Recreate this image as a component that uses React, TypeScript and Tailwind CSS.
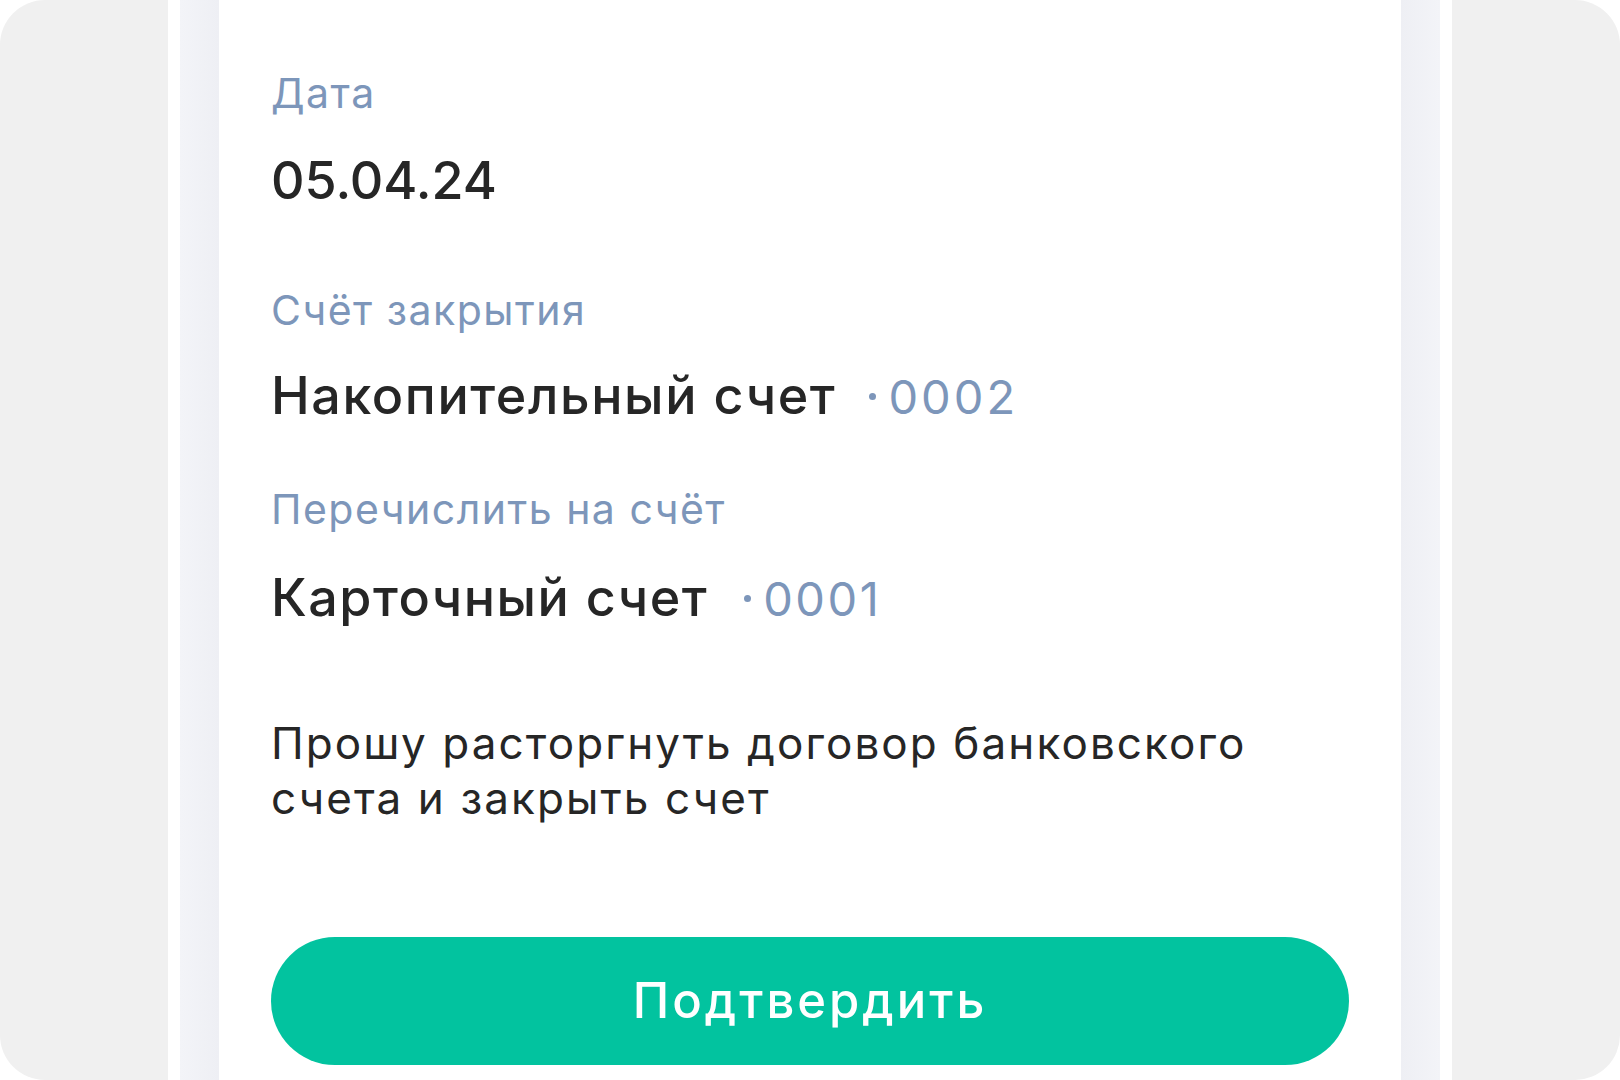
export default function App() {
  return (
    <div className="w-[1620px] h-[1080px] bg-white overflow-hidden">
      <div className="h-full bg-[#f0f0f0] rounded-[45px] flex justify-center">
        {/* white phone frame */}
        <div className="w-[1284px] h-full bg-white px-[12px] flex">
          <div className="w-[39px] h-full bg-gradient-to-r from-[#f3f4f8] to-[#eeeff4]" />
          <div
            className="flex-1 h-full bg-white px-[52px] flex flex-col text-[#262626]"
            style={{ fontFamily: 'Inter, "Noto Sans", sans-serif' }}
          >
            <p className="pt-[73px] text-[41px] leading-none tracking-[1.5px] text-[#7d96ba]">Дата</p>
            <p className="mt-[41px] text-[52px] leading-none font-medium">05.04.24</p>

            <p className="mt-[83px] text-[41px] leading-none tracking-[1.5px] text-[#7d96ba]">Счёт закрытия</p>
            <div className="mt-[39px] flex items-baseline leading-none">
              <span className="text-[52px] font-medium tracking-[1.6px]">Накопительный счет</span>
              <span className="ml-[33px] w-[7px] h-[7px] rounded-full bg-[#7d96ba] -translate-y-[14px]" />
              <span className="ml-[12px] text-[47px] tracking-[3px] text-[#7d96ba]">0002</span>
            </div>

            <p className="mt-[67px] text-[41px] leading-none tracking-[1.5px] text-[#7d96ba]">Перечислить на счёт</p>
            <div className="mt-[42px] flex items-baseline leading-none">
              <span className="text-[52px] font-medium tracking-[1.5px]">Карточный счет</span>
              <span className="ml-[36px] w-[7px] h-[7px] rounded-full bg-[#7d96ba] -translate-y-[14px]" />
              <span className="ml-[12px] text-[47px] tracking-[2.5px] text-[#7d96ba]">0001</span>
            </div>

            <p className="mt-[92px] text-[44px] leading-[55px] tracking-[2.1px]">
              Прошу расторгнуть договор банковского
              <br />
              счета и закрыть счет
            </p>

            <button className="mt-[111px] h-[128px] w-full shrink-0 rounded-full bg-[#02c39f] text-white text-[49px] font-medium tracking-[3px]">
              Подтвердить
            </button>
          </div>
          <div className="w-[39px] h-full bg-gradient-to-l from-[#f3f4f8] to-[#eeeff4]" />
        </div>
      </div>
    </div>
  );
}
